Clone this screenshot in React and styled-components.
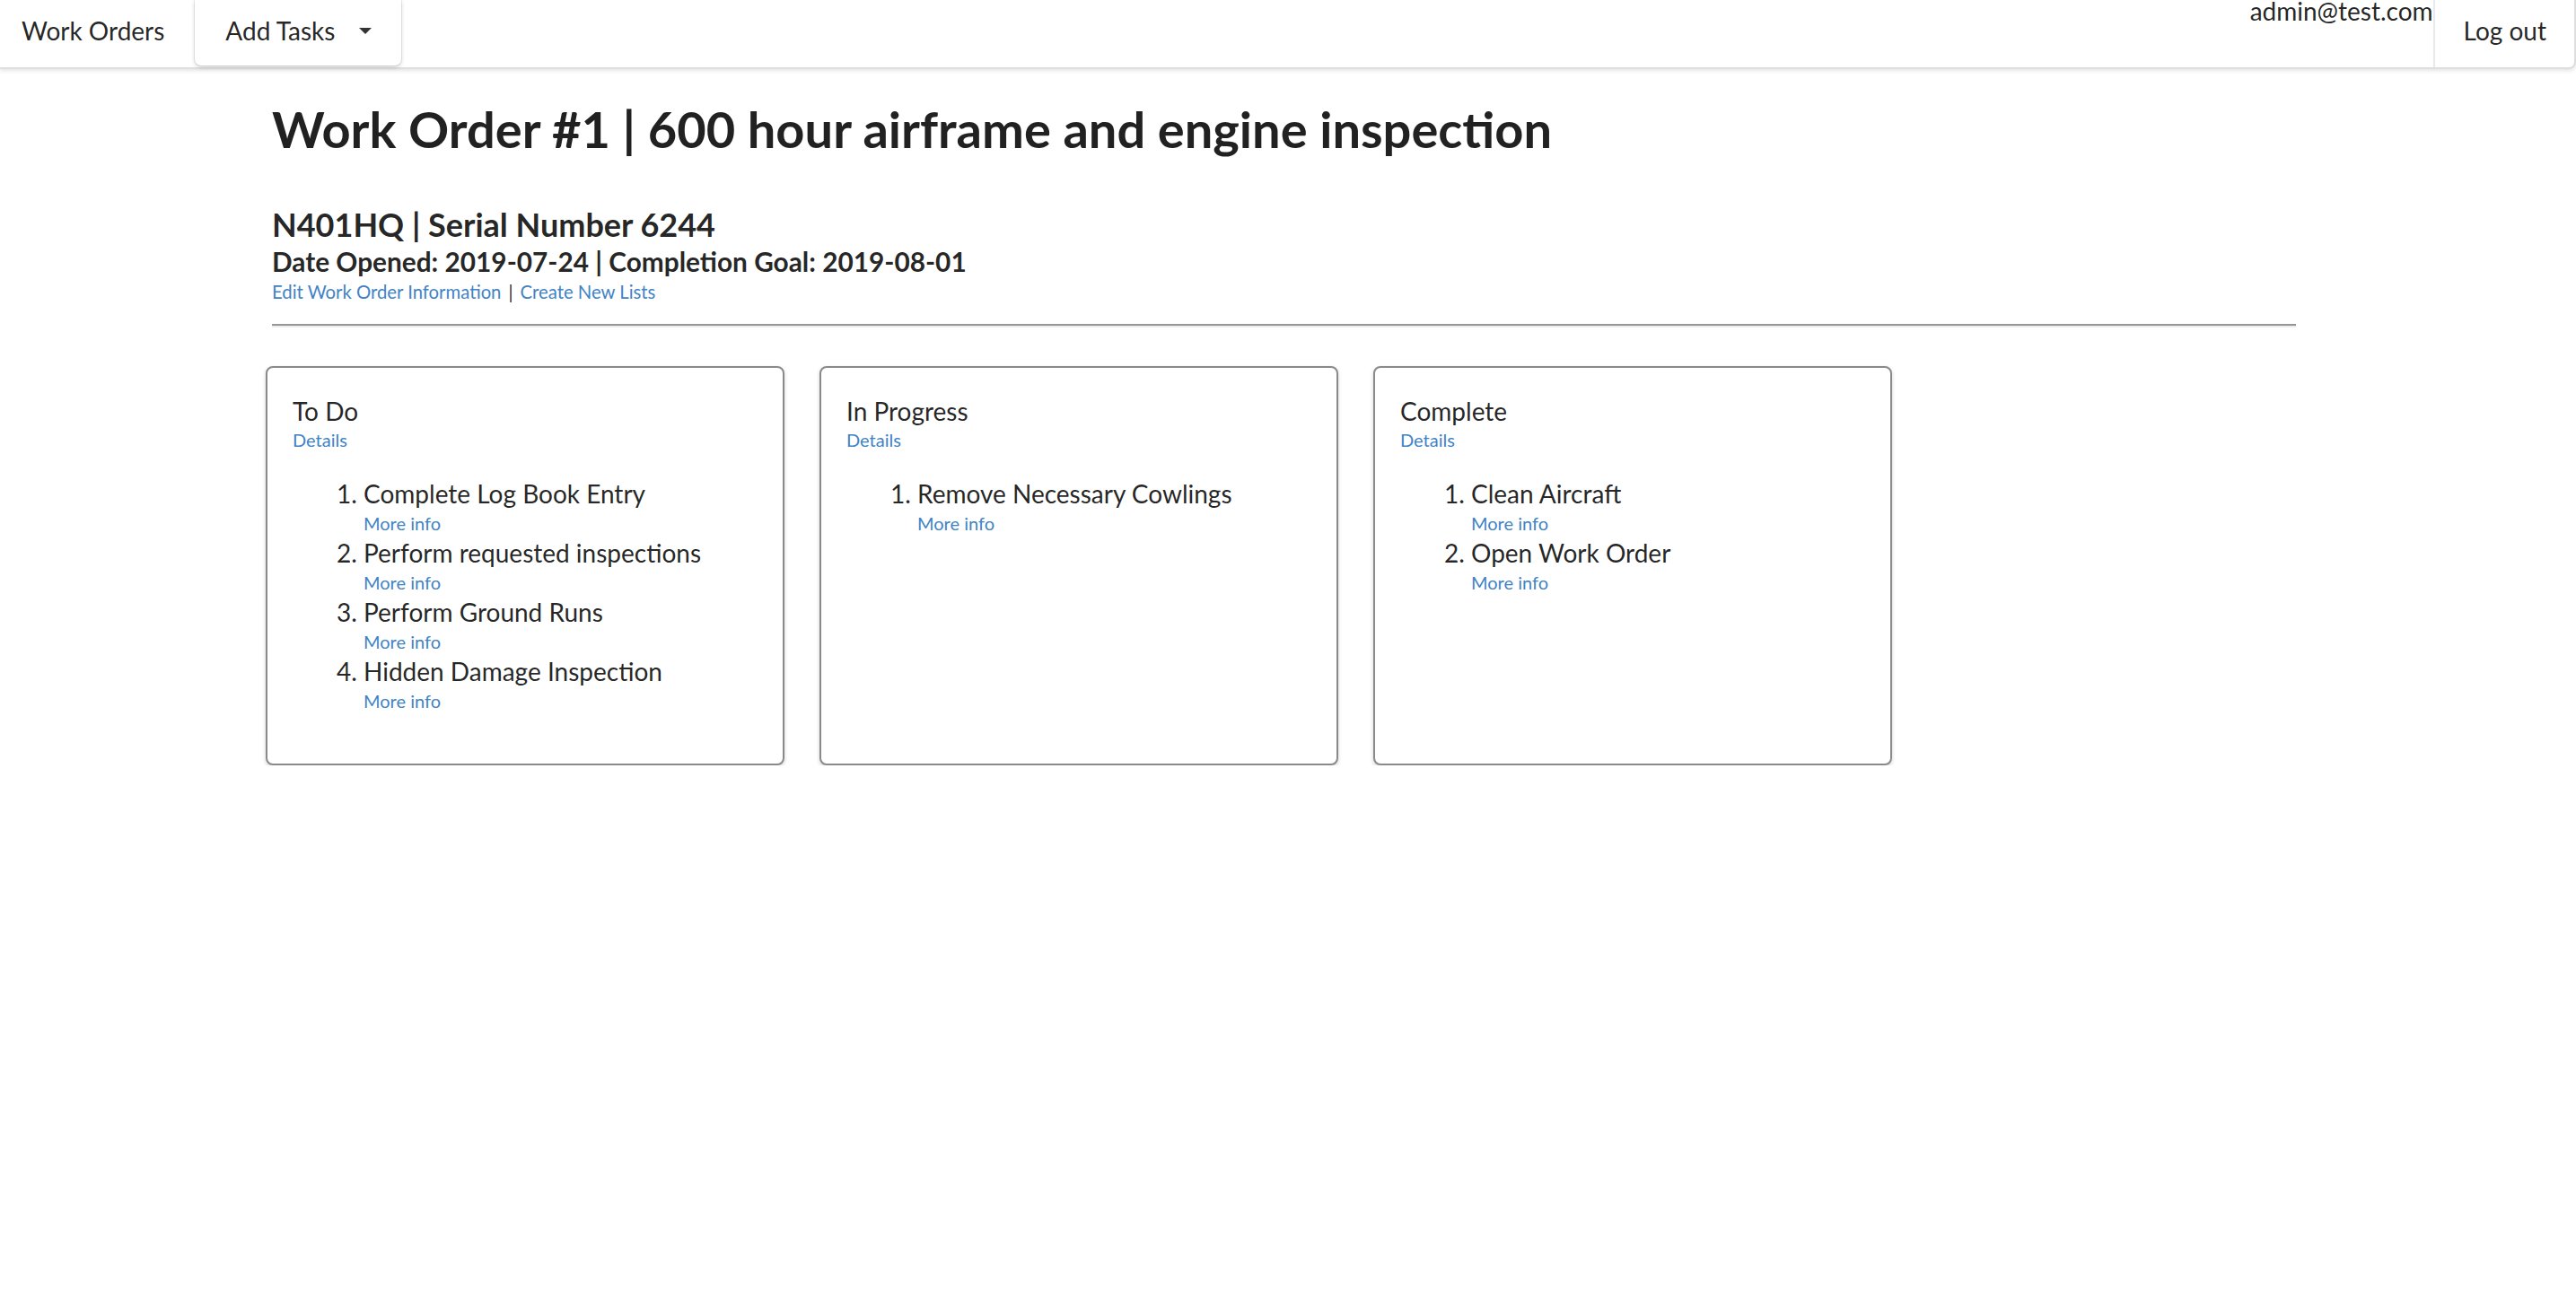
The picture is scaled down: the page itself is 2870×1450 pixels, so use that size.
import React from "react";
import styled, { createGlobalStyle } from "styled-components";

const GlobalStyle = createGlobalStyle`
    html, body {
        margin: 0;
        padding: 0;
        background: #ffffff;
    }
    body {
        font-family: Lato, "Open Sans", "Liberation Sans", sans-serif;
        color: rgba(0, 0, 0, 0.87);
        font-size: 28px;
    }
`;

const Menu = styled.nav`
    display: flex;
    flex-direction: row;
    align-items: stretch;
    height: 75px;
    background: #ffffff;
    border-bottom: 2px solid rgba(34, 36, 38, 0.15);
    border-right: 2px solid rgba(34, 36, 38, 0.15);
    border-bottom-right-radius: 8px;
    box-shadow: 0 2px 4px 0 rgba(34, 36, 38, 0.12);
`;

const MenuItem = styled.div`
    display: flex;
    align-items: flex-start;
    padding: 20px ${p => p.$right || 32}px 0 ${p => p.$left || 32}px;
    font-size: 28px;
    line-height: 28px;
    color: rgba(0, 0, 0, 0.87);
    border-left: ${p => (p.$divided ? "2px solid rgba(34, 36, 38, 0.1)" : "none")};
`;

const DropdownItem = styled.div`
    display: flex;
    align-items: flex-start;
    gap: 27px;
    height: 73px;
    padding: 20px 33px 0 34px;
    box-sizing: border-box;
    font-size: 28px;
    line-height: 28px;
    background: #ffffff;
    border-radius: 0 0 7px 7px;
    box-shadow: 0 2px 4px 0 rgba(34, 36, 38, 0.2), 0 0 0 1px rgba(34, 36, 38, 0.08);
    margin-left: 2px;
`;

const Caret = styled.svg`
    margin-top: 11px;
`;

const Spacer = styled.div`
    flex: 1;
`;

const UserEmail = styled.div`
    font-size: 28px;
    line-height: 24px;
    padding-right: 0;
`;

const Page = styled.main`
    width: 2255px;
    margin-left: 303px;
    padding-top: 31px;
`;

const Title = styled.h1`
    margin: 0;
    font-size: 56px;
    line-height: 72px;
    font-weight: 700;
`;

const Aircraft = styled.h3`
    margin: 47px 0 0;
    font-size: 36px;
    line-height: 46px;
    font-weight: 700;
`;

const Dates = styled.h4`
    margin: 0;
    font-size: 29.8px;
    line-height: 38px;
    font-weight: 700;
`;

const LinkRow = styled.div`
    font-size: 20.3px;
    line-height: 29px;
    display: flex;
    gap: 8px;
`;

const Link = styled.a`
    color: #4183c4;
    text-decoration: none;
    cursor: pointer;
    display: ${p => (p.$block ? "block" : "inline")};
    font-size: ${p => p.$size || 20}px;
    line-height: ${p => p.$lh || 28}px;
`;

const Divider = styled.hr`
    margin: 21px 0 0;
    height: 0;
    border: none;
    border-top: 2px solid #969696;
    border-bottom: 2px solid #ececec;
`;

const CardRow = styled.div`
    display: flex;
    flex-direction: row;
    align-items: stretch;
    gap: 39px;
    margin: 43px 0 0 -7px;
`;

const Card = styled.section`
    width: 578px;
    box-sizing: border-box;
    padding: 30px 28px 29px 28px;
    border: 2px solid #8a8a8a;
    border-radius: 8px;
    box-shadow: 0 2px 4px 0 rgba(0, 0, 0, 0.18);
    background: #ffffff;
`;

const CardHeader = styled.div`
    font-size: 28px;
    line-height: 36px;
    font-weight: 400;
`;

const TaskList = styled.ol`
    margin: 26px 0 28px;
    padding-left: 79px;
`;

const Task = styled.li`
    font-size: 28px;
    line-height: 40px;
`;

const lists = [
    {
        name: "To Do",
        tasks: [
            "Complete Log Book Entry",
            "Perform requested inspections",
            "Perform Ground Runs",
            "Hidden Damage Inspection",
        ],
    },
    { name: "In Progress", tasks: ["Remove Necessary Cowlings"] },
    { name: "Complete", tasks: ["Clean Aircraft", "Open Work Order"] },
];

const TaskCard = ({ list }) => (
    <Card>
        <CardHeader>{list.name}</CardHeader>
        <Link $block>Details</Link>
        <TaskList>
            {list.tasks.map(task => (
                <Task key={task}>
                    {task}
                    <Link $block $lh={26}>More info</Link>
                </Task>
            ))}
        </TaskList>
    </Card>
);

export default function App() {
    return (
        <>
            <GlobalStyle />
            <Menu>
                <MenuItem $left={24} $right={32}>Work Orders</MenuItem>
                <DropdownItem>
                    Add Tasks
                    <Caret width="14" height="7" viewBox="0 0 14 7">
                        <polygon points="0,0 14,0 7,7" fill="rgba(0,0,0,0.8)" />
                    </Caret>
                </DropdownItem>
                <Spacer />
                <UserEmail>admin@test.com</UserEmail>
                <MenuItem $divided $left={32} $right={31}>Log out</MenuItem>
            </Menu>
            <Page>
                <Title>Work Order #1 | 600 hour airframe and engine inspection</Title>
                <Aircraft>N401HQ | Serial Number 6244</Aircraft>
                <Dates>Date Opened: 2019-07-24 | Completion Goal: 2019-08-01</Dates>
                <LinkRow>
                    <Link $size={20.3}>Edit Work Order Information</Link>
                    <span>|</span>
                    <Link $size={20.3}>Create New Lists</Link>
                </LinkRow>
                <Divider />
                <CardRow>
                    {lists.map(list => (
                        <TaskCard key={list.name} list={list} />
                    ))}
                </CardRow>
            </Page>
        </>
    );
}
